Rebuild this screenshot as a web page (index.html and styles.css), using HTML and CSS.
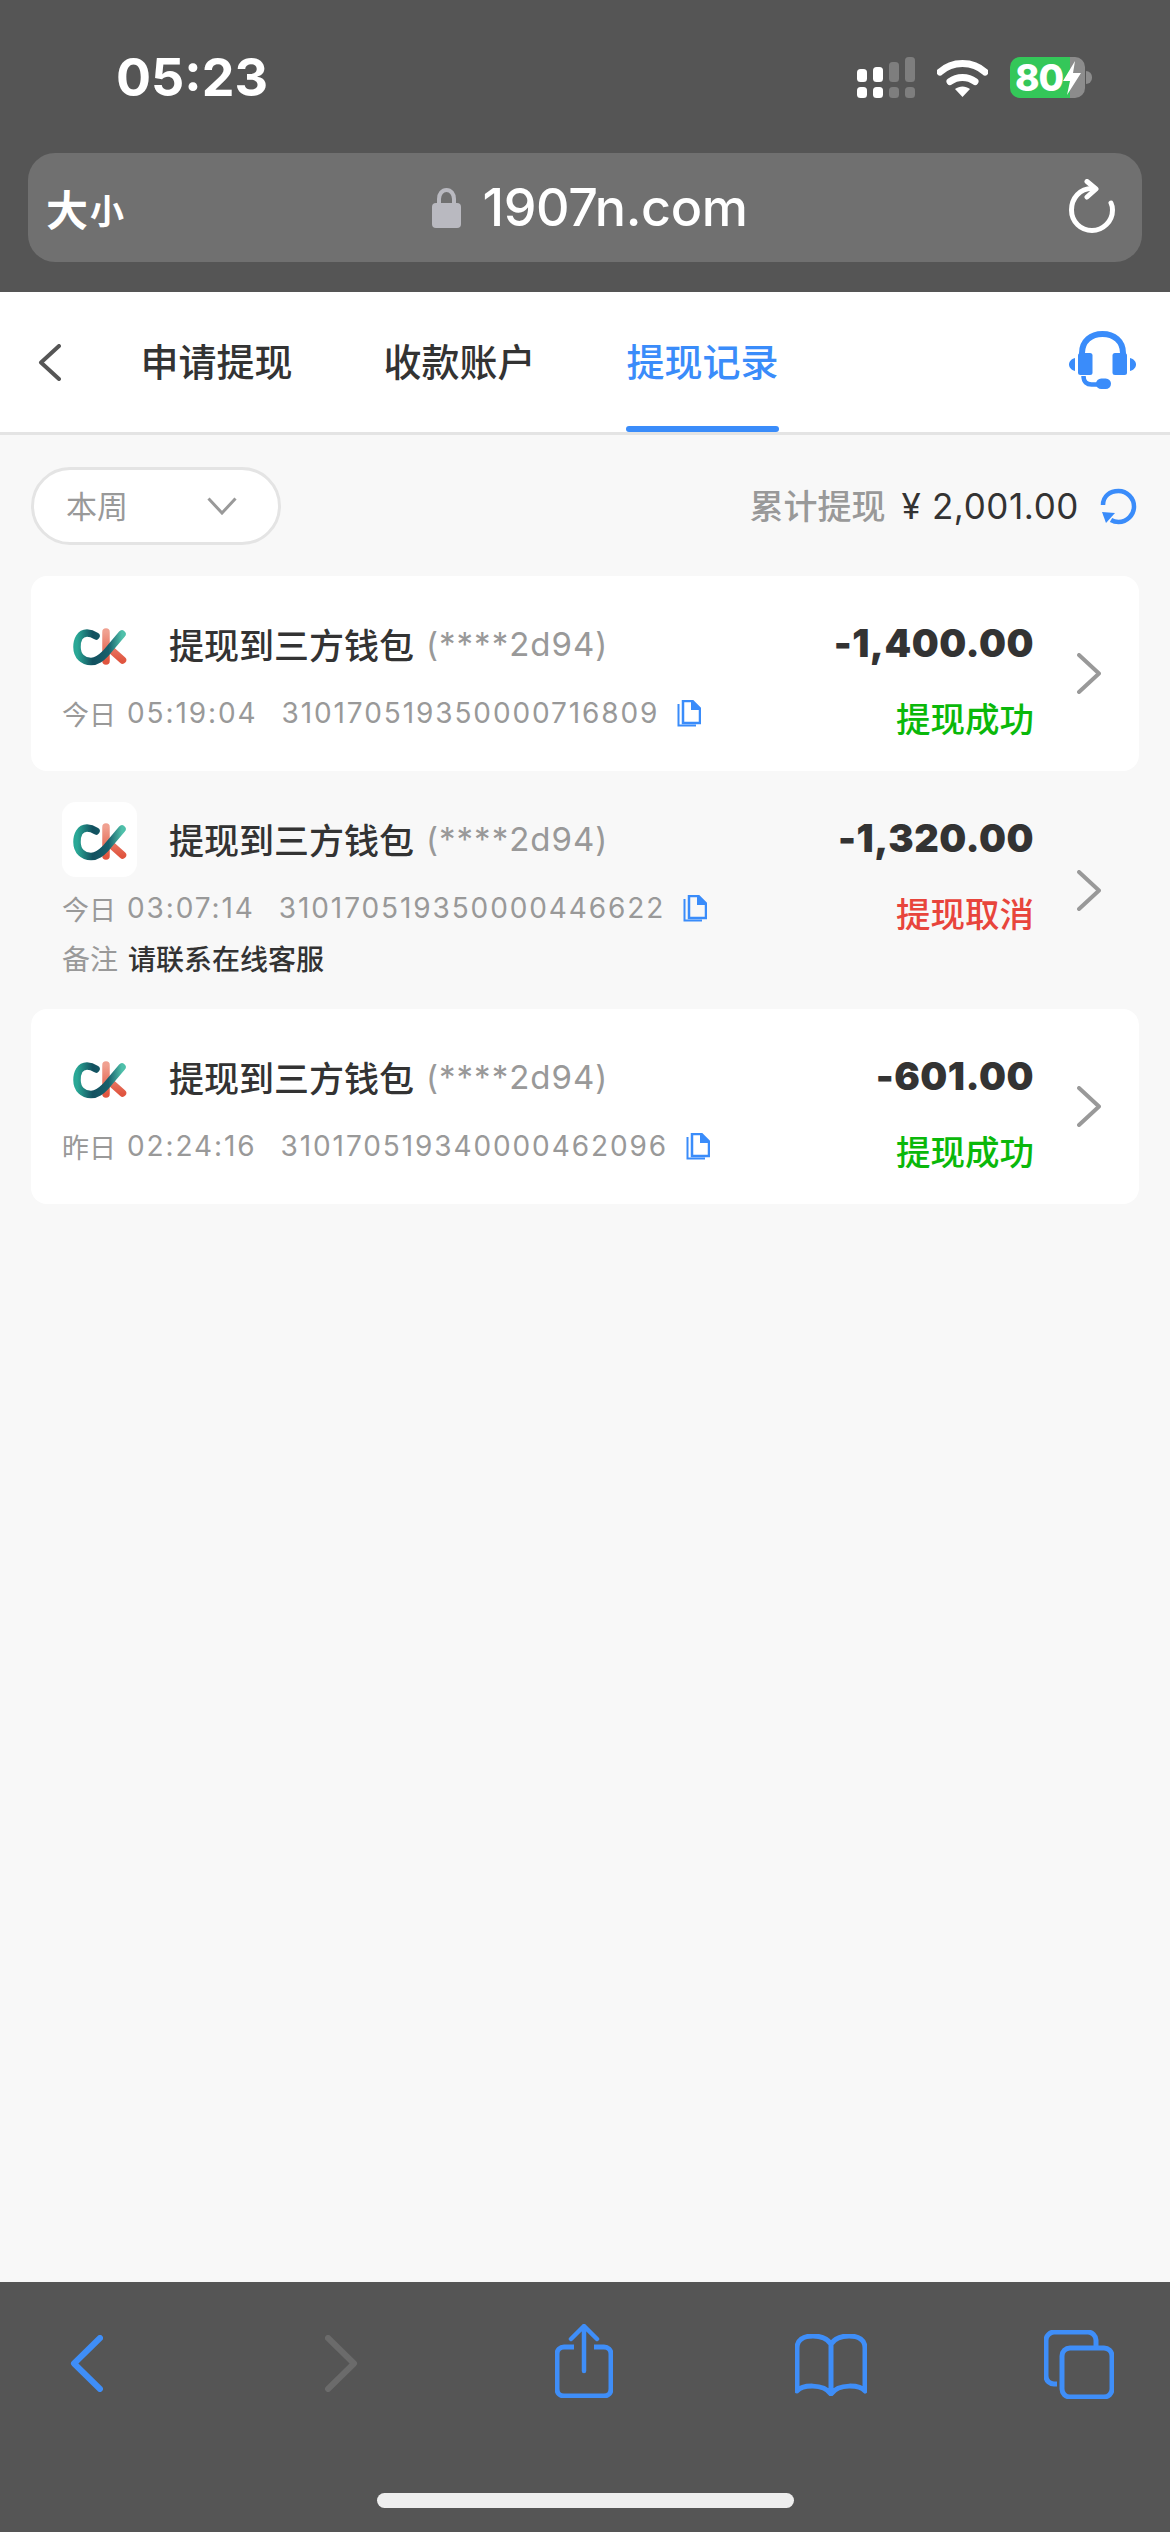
FILE: index.html
```html
<!DOCTYPE html>
<html lang="zh-CN">
<head>
<meta charset="utf-8">
<title>提现记录</title>
<link rel="stylesheet" href="styles.css">
</head>
<body>
<svg class="defs" width="0" height="0" aria-hidden="true">
  <defs>
    <linearGradient id="ckC" x1="0" y1="0" x2="1" y2="0">
      <stop offset="0" stop-color="#2aa896"/>
      <stop offset=".35" stop-color="#12505f"/>
      <stop offset=".7" stop-color="#17606c"/>
      <stop offset="1" stop-color="#4fc0aa"/>
    </linearGradient>
    <linearGradient id="ckK" x1="0" y1="0" x2="0" y2="1">
      <stop offset="0" stop-color="#f0a090"/>
      <stop offset="1" stop-color="#e0553f"/>
    </linearGradient>
    <symbol id="logo" viewBox="0 0 75 75">
      <path d="M44 25v29M47 41l13.500 12" fill="none" stroke="url(#ckK)" stroke-width="7.500" stroke-linecap="round"/>
      <path d="M34 29c-3-2-6-3-9-3-7 0-10 7-10 14 0 9 6 14.500 14 14.500 7 0 11-4.500 15-8.500l16-19" fill="none" stroke="url(#ckC)" stroke-width="7.500" stroke-linecap="round"/>
    </symbol>
    <symbol id="copy" viewBox="0 0 24 27">
      <path d="M1.500 4v21.500H19" fill="none" stroke="currentColor" stroke-width="2"/>
      <path d="M6 1h9.500L23 8.500V23H6z" fill="none" stroke="currentColor" stroke-width="2.500"/>
      <path d="M14 1h2l7 7v2h-9z" fill="currentColor"/>
    </symbol>
    <symbol id="chev" viewBox="0 0 24 41">
      <path d="M2 2l20 18.500L2 39" fill="none" stroke="currentColor" stroke-width="4" stroke-linecap="round" stroke-linejoin="round"/>
    </symbol>
  </defs>
</svg>

<header class="browser-top">
  <div class="status">
    <span class="clock">05:23</span>
    <div class="status-icons">
      <svg class="signal" width="58" height="41" viewBox="0 0 58 41">
        <g fill="#fff">
          <rect x="0" y="12" width="10" height="13" rx="3.500"/><rect x="16" y="10" width="10" height="15" rx="3.500"/>
          <rect x="0" y="30" width="10" height="11" rx="3.500"/><rect x="16" y="30" width="10" height="11" rx="3.500"/>
        </g>
        <g fill="#7e7e7e">
          <rect x="32" y="5" width="10" height="20" rx="3.500"/><rect x="48" y="0" width="10" height="25" rx="3.500"/>
          <rect x="32" y="30" width="10" height="11" rx="3.500"/><rect x="48" y="30" width="10" height="11" rx="3.500"/>
        </g>
      </svg>
      <svg class="wifi" width="51" height="38" viewBox="0 0 51 38">
        <path d="M3 13C15 1.500 36 1.500 48 13" fill="none" stroke="#fff" stroke-width="7" stroke-linecap="round"/>
        <path d="M13 22.500c7-5.500 18-5.500 25 0" fill="none" stroke="#fff" stroke-width="7" stroke-linecap="round"/>
        <path d="M18 30c4.500-3.500 10.500-3.500 15 0l-7.500 8z" fill="#fff"/>
      </svg>
      <div class="battery">
        <span class="battery-level">80</span>
        <svg class="bolt" width="18" height="34" viewBox="0 0 18 34"><path d="M12 0L0 20h7l-3 14L18 12h-8z" fill="#fff"/></svg>
        <i class="battery-nub"></i>
      </div>
    </div>
  </div>
  <div class="urlbar">
    <span class="size"><b>大</b><small>小</small></span>
    <div class="address">
      <svg class="lock" width="29" height="40" viewBox="0 0 29 40">
        <path d="M7 18V11c0-5 3-9 7.500-9S22 6 22 11v7" fill="none" stroke="#b9b9c0" stroke-width="4"/>
        <rect x="0" y="15" width="29" height="25" rx="4" fill="#b9b9c0"/>
      </svg>
      <span class="domain">1907n.com</span>
    </div>
    <svg class="reload" width="46" height="54" viewBox="0 0 46 54">
      <path d="M23 9.500C11 9.500 2.500 19 2.500 31S12 51.500 23 51.500 43.500 42.500 43.500 31c0-2.500-.5-5-1.500-7" fill="none" stroke="#fff" stroke-width="5" stroke-linecap="round"/>
      <path d="M18 2.500l9 7.500-9 8" fill="none" stroke="#fff" stroke-width="5" stroke-linecap="round" stroke-linejoin="round"/>
    </svg>
  </div>
</header>

<nav class="tabs">
  <svg class="back" width="23" height="37" viewBox="0 0 23 37"><path d="M21 2L3 18.500 21 35" fill="none" stroke="#555" stroke-width="4" stroke-linecap="round" stroke-linejoin="round"/></svg>
  <div class="tab-list">
    <div class="tab"><span class="tab-label">申请提现</span></div>
    <div class="tab"><span class="tab-label">收款账户</span></div>
    <div class="tab tab-active"><span class="tab-label">提现记录</span><i class="tab-bar"></i></div>
  </div>
  <svg class="headset" width="67" height="58" viewBox="0 0 67 58">
    <path d="M13 24v-2C13 10 22 3 33.500 3S54 10 54 22v2" fill="none" stroke="#3a8cfa" stroke-width="6"/>
    <rect x="9" y="22" width="14.500" height="22" rx="2.500" fill="#3a8cfa"/>
    <rect x="43.500" y="22" width="14.500" height="22" rx="2.500" fill="#3a8cfa"/>
    <path d="M6 27v13C2 39 0 36 0 33.500S2 28 6 27zM61 27v13c4-1 6-4 6-6.500S65 28 61 27z" fill="#3a8cfa"/>
    <path d="M14.500 45c0 6 3.500 8.500 8 8.500H33" fill="none" stroke="#3a8cfa" stroke-width="4.500"/>
    <rect x="27" y="47.500" width="15" height="10.500" rx="5.250" fill="#3a8cfa"/>
  </svg>
</nav>

<main class="page">
  <div class="filter-row">
    <div class="filter">
      <span class="filter-label">本周</span>
      <svg width="30" height="18" viewBox="0 0 30 18"><path d="M1.500 1.500L15 16 28.500 1.500" fill="none" stroke="#999" stroke-width="3"/></svg>
    </div>
    <div class="summary">
      <span class="summary-label">累计提现</span>
      <span class="summary-value">¥ 2,001.00</span>
      <svg class="refresh" width="37" height="37" viewBox="0 0 37 37">
        <path d="M3 17C3 8 10 3 18.500 3S34 10 34 18.500 27 34 18.500 34c-3 0-5.500-.8-7.500-2" fill="none" stroke="#3a8cfa" stroke-width="4.500"/>
        <path d="M2 24l13 1-9 10z" fill="#3a8cfa"/>
      </svg>
    </div>
  </div>

  <article class="record card-white">
    <div class="record-main">
      <div class="record-title">
        <svg class="logo-box" width="75" height="75"><use href="#logo"/></svg>
        <span class="wallet">提现到三方钱包</span>
        <span class="account">(****2d94)</span>
      </div>
      <div class="record-meta">
        <span>今日</span><span class="num time">05:19:04</span><span class="num serial">310170519350000716809</span>
        <svg class="copy" width="24" height="27"><use href="#copy"/></svg>
      </div>
    </div>
    <div class="record-side">
      <span class="amount">-1,400.00</span>
      <span class="state ok">提现成功</span>
    </div>
    <svg class="chevron" width="24" height="41"><use href="#chev"/></svg>
  </article>

  <article class="record">
    <div class="record-main">
      <div class="record-title">
        <svg class="logo-box logo-boxed" width="75" height="75"><use href="#logo"/></svg>
        <span class="wallet">提现到三方钱包</span>
        <span class="account">(****2d94)</span>
      </div>
      <div class="record-meta">
        <span>今日</span><span class="num time">03:07:14</span><span class="num serial">310170519350000446622</span>
        <svg class="copy" width="24" height="27"><use href="#copy"/></svg>
      </div>
      <div class="record-note">备注<span>请联系在线客服</span></div>
    </div>
    <div class="record-side">
      <span class="amount">-1,320.00</span>
      <span class="state bad">提现取消</span>
    </div>
    <svg class="chevron" width="24" height="41"><use href="#chev"/></svg>
  </article>

  <article class="record card-white">
    <div class="record-main">
      <div class="record-title">
        <svg class="logo-box" width="75" height="75"><use href="#logo"/></svg>
        <span class="wallet">提现到三方钱包</span>
        <span class="account">(****2d94)</span>
      </div>
      <div class="record-meta">
        <span>昨日</span><span class="num time">02:24:16</span><span class="num serial">310170519340000462096</span>
        <svg class="copy" width="24" height="27"><use href="#copy"/></svg>
      </div>
    </div>
    <div class="record-side">
      <span class="amount">-601.00</span>
      <span class="state ok">提现成功</span>
    </div>
    <svg class="chevron" width="24" height="41"><use href="#chev"/></svg>
  </article>
</main>

<footer class="browser-bottom">
  <div class="toolbar">
    <svg class="nav-back" width="33" height="57" viewBox="0 0 33 57"><path d="M30 3L4 28.500 30 54" fill="none" stroke="#3f8ef8" stroke-width="6" stroke-linecap="round" stroke-linejoin="round"/></svg>
    <svg class="fwd" width="33" height="57" viewBox="0 0 33 57"><path d="M3 3l26 25.500L3 54" fill="none" stroke="#6b6b6b" stroke-width="6" stroke-linecap="round" stroke-linejoin="round"/></svg>
    <svg class="share" width="58" height="74" viewBox="0 0 58 74">
      <path d="M19 23H9c-4 0-7 3-7 7v35c0 4 3 7 7 7h40c4 0 7-3 7-7V30c0-4-3-7-7-7H39" fill="none" stroke="#3f8ef8" stroke-width="5"/>
      <path d="M29 3v44M16 15L29 2l13 13" fill="none" stroke="#3f8ef8" stroke-width="4.500" stroke-linecap="round" stroke-linejoin="round"/>
    </svg>
    <svg class="book" width="72" height="62" viewBox="0 0 72 62">
      <path d="M36 10C32 4 26 2 18 2 8 2 2 6 2 14v43c5-6 26-8 34 3 8-11 29-9 34-3V14c0-8-6-12-16-12-8 0-14 2-18 8zM36 10v48" fill="none" stroke="#3f8ef8" stroke-width="5" stroke-linejoin="round"/>
    </svg>
    <svg class="pages" width="70" height="69" viewBox="0 0 70 69">
      <path d="M13 54H10c-4 0-8-3-8-8V10c0-4 4-8 8-8h34c4 0 8 4 8 8v7" fill="none" stroke="#3f8ef8" stroke-width="5"/>
      <rect x="18" y="18" width="50" height="49" rx="8" fill="none" stroke="#3f8ef8" stroke-width="5"/>
    </svg>
  </div>
  <i class="home-bar"></i>
</footer>
</body>
</html>
```

FILE: styles.css
```css
* { box-sizing: border-box; }
html, body { margin: 0; padding: 0; }
body {
  width: 1170px;
  height: 2532px;
  display: flex;
  flex-direction: column;
  background: #f8f8f8;
  font-family: "Noto Sans CJK SC", Roboto, sans-serif;
  color: #333;
  overflow: hidden;
}
svg { display: block; flex: none; }
i { display: block; }
.defs { position: absolute; }

/* Browser chrome, top */
.browser-top {
  height: 292px;
  background: #555;
  padding: 57px 28px 0;
  color: #fff;
}
.status { display: flex; align-items: center; justify-content: space-between; height: 41px; padding-left: 88px; padding-right: 57px; }
.clock { font: 700 52px/41px Inter, sans-serif; }
.status-icons { display: flex; align-items: center; gap: 22px; }
.battery {
  width: 75px; height: 41px; border-radius: 10px;
  background: linear-gradient(90deg, #34c759 0 60px, #8c8c8c 60px);
  display: flex; align-items: center; padding-left: 5px; position: relative;
}
.battery-level { font: 800 37px/41px Inter, sans-serif; letter-spacing: -1px; color: #fff; }
.battery-nub { position: absolute; right: -7px; top: 14px; width: 6px; height: 13px; border-radius: 0 6px 6px 0; background: #8c8c8c; }
.urlbar {
  margin-top: 55px;
  height: 109px;
  border-radius: 27px;
  background: #707070;
  display: flex; align-items: center; justify-content: space-between;
  padding: 0 27px 0 18px;
}
.size { display: flex; align-items: flex-end; width: 77px; }
.size b { font-size: 42px; line-height: 46px; font-weight: 700; }
.size small { font-size: 34px; line-height: 42px; font-weight: 700; margin-left: 2px; }
.address { display: flex; align-items: center; gap: 21px; margin-right: 12px; }
.domain { font: 500 52px/60px Inter, sans-serif; letter-spacing: -.4px; }
.reload { margin-top: -4px; }

/* Tabs */
.tabs {
  height: 143px;
  background: #fff;
  border-bottom: 3px solid #e4e4e4;
  display: flex; align-items: center;
  padding: 0 34px 0 38px;
}
.tab-list { display: flex; gap: 90px; margin-left: 79px; align-self: stretch; flex: 1; }
.tab { width: 153px; display: flex; flex-direction: column; align-items: center; }
.tab-label { flex: 1; display: flex; align-items: center; font-size: 38px; font-weight: 500; color: #333; padding-bottom: 6px; }
.tab-active .tab-label { color: #3a8cfa; padding-bottom: 0; }
.tab-bar { width: 153px; height: 6px; border-radius: 3px; background: #3a8cfa; }
.headset { margin-top: -4px; }

/* Page */
.page { flex: 1; padding: 32px 31px 0; }
.filter-row { display: flex; justify-content: space-between; align-items: center; height: 78px; margin-bottom: 31px; }
.filter {
  width: 250px; height: 78px; border: 3px solid #e4e4e4; border-radius: 39px; background: #fff;
  display: flex; align-items: center; justify-content: space-between;
  padding: 0 41px 0 32px; font-size: 31px; color: #999;
}
.filter-label { padding-bottom: 4px; }
.summary { display: flex; align-items: center; }
.summary-label { font-size: 34px; font-weight: 500; color: #999; padding-bottom: 4px; }
.summary-value { font: 400 35px/40px Inter, sans-serif; letter-spacing: .6px; color: #333; margin-left: 16px; }
.refresh { margin-left: 21px; margin-right: 2px; }

.record { display: flex; align-items: center; border-radius: 16px; padding-left: 31px; }
.card-white { background: #fff; }
.record-main { flex: 1; padding: 31px 0 27px; min-width: 0; align-self: flex-start; }
.record-title { display: flex; align-items: center; height: 75px; }
.logo-box { margin-right: 32px; }
.logo-boxed { background: #fff; border-radius: 14px; }
.wallet { font-size: 35px; font-weight: 500; color: #333; padding-bottom: 3px; }
.account { font: 400 33px/40px Inter, sans-serif; letter-spacing: 1px; color: #999; margin-left: 12px; padding-bottom: 2px; }
.record-meta { display: flex; align-items: center; height: 62px; font-size: 27px; color: #999; }
.record-meta .num { font-family: Inter, sans-serif; font-size: 28px; letter-spacing: 1.900px; }
.time { margin-left: 11px; }
.serial { margin-left: 24px; }
.copy { color: #3a8cfa; margin-left: 18px; }
.record-note { height: 30px; margin-top: 4px; margin-bottom: 9px; font-size: 28px; line-height: 30px; color: #999; }
.record-note span { color: #333; font-weight: 500; margin-left: 10px; }
.record-side { width: 300px; align-self: flex-start; padding-top: 45px; display: flex; flex-direction: column; align-items: flex-end; gap: 30px; }
.amount { font: 900 38px/44px Inter, sans-serif; letter-spacing: .5px; color: #333; }
.state { font-size: 34.500px; line-height: 44px; font-weight: 500; }
.ok { color: #0ab80a; }
.bad { color: #e8453c; }
.chevron { color: #999; margin: 0 38px 0 43px; }

/* Browser chrome, bottom */
.browser-bottom { height: 250px; background: #555; display: flex; flex-direction: column; align-items: center; }
.toolbar { width: 100%; display: flex; padding: 42px 0 0 70px; height: 211px; align-items: flex-start; }
.nav-back { margin-top: 11px; }
.fwd { margin: 11px 0 0 222px; }
.share { margin-left: 197px; }
.book { margin: 10px 0 0 182px; }
.pages { margin: 6px 0 0 177px; }
.home-bar { width: 417px; height: 15px; border-radius: 8px; background: #eee; }
```
